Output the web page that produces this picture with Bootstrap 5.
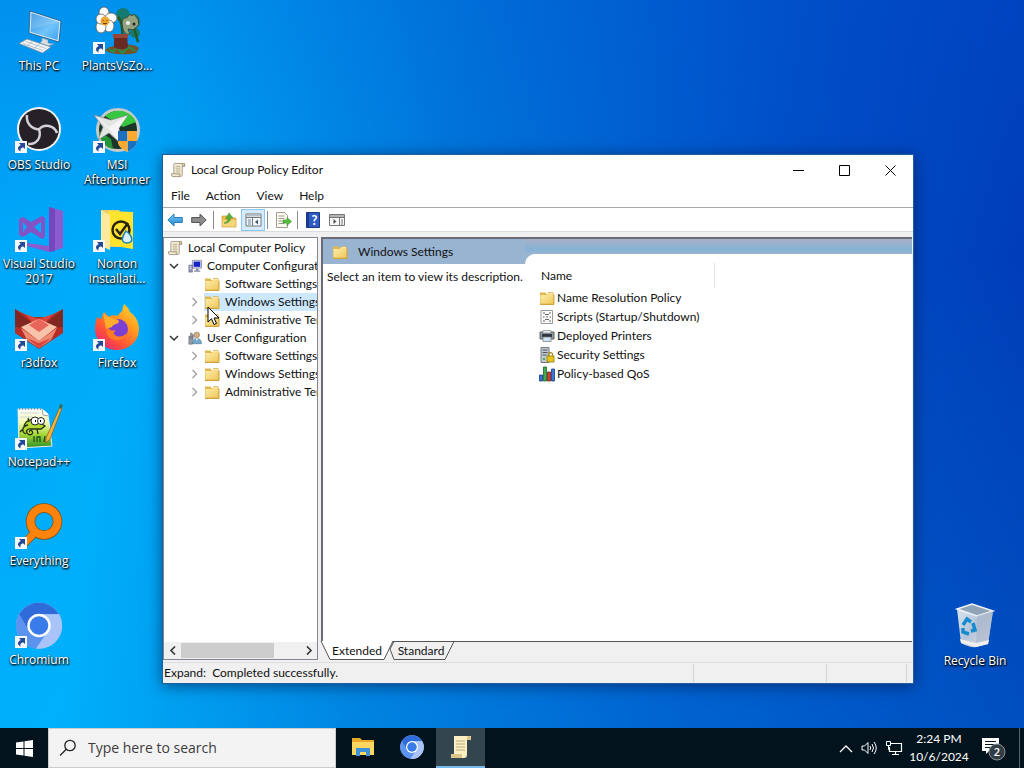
<!DOCTYPE html>
<html lang="en">
<head>
<meta charset="utf-8">
<meta name="viewport" content="width=device-width, initial-scale=1">
<title>Local Group Policy Editor</title>
<link href="https://cdn.jsdelivr.net/npm/bootstrap@5.3.0/dist/css/bootstrap.min.css" rel="stylesheet">
<style>
  body { font-family: "Open Sans", "Noto Sans", sans-serif; font-size: 12px; line-height: 18px; color: #111; cursor: default; }
  button, input { font: inherit; color: inherit; }
  svg { display: block; flex: none; }
  button { border: 0; background: none; padding: 0; }
  .desktop { background: linear-gradient(to bottom, #0048c840, #00c8ff00 35%, #00c8ff28), linear-gradient(100deg, #00a8fa 0, #00acfa 16%, #0078dc 42%, #0050c8 70%, #0038b4 100%); }

  /* shortcuts */
  .shortcuts { display: grid; grid-template-columns: 78px 78px; grid-auto-rows: 99px; width: 156px; padding-top: 8px; }
  .shortcut { color: #fff; text-decoration: none; text-align: center; line-height: 15px; text-shadow: 0 1px 2px #000, 1px 1px 2px #000; width: 78px; }
  .shortcut svg { margin: 0 auto 2px; overflow: visible; }
  .shortcut.solo { grid-column: 1; }
  .bin { right: 10px; bottom: 60px; }

  /* editor window */
  .editor { font-family: Lato, "Open Sans", sans-serif; left: 162px; right: 110px; top: 154px; bottom: 44px; background: #f0f0f0; border: 1px solid #1c5f9c; box-shadow: 0 2px 14px #00184099; }
  .titlebar { height: 30px; gap: 5px; padding-left: 8px; }
  .titlebar button { width: 46px; height: 30px; display: grid; place-items: center; }
  .menus { height: 23px; border-bottom: 1px solid #a9a9a9; }
  .menus button { padding: 0 8px; }
  .tools { height: 24px; border-bottom: 1px solid #dcdcdc; }
  .tools button { width: 24px; height: 22px; display: grid; place-items: center; border: 1px solid transparent; }
  .tools button.on { background: #d5eafa; border-color: #8cc6f2; }
  .tools .rule { width: 1px; height: 18px; background: #8a8a8a; margin: 0 3px 0 2px; }
  .panes { padding: 5px 1px 2px 0; gap: 3px; }
  .side { width: 155px; background: #fff; border: 1px solid #828790; }
  .tree { padding-top: 1px; }
  .tree li { height: 18px; }
  .tree .twist { width: 20px; display: grid; place-items: center; flex: none; }
  .tree .lbl { white-space: nowrap; padding-left: 5px; }
  .tree .kid { padding-left: 20px; }
  .tree .hot { background: #cce8ff; }
  .hscroll { height: 17px; background: #f0f0f0; }
  .hscroll button { width: 17px; height: 17px; display: grid; place-items: center; }
  .hscroll .thumb { width: 78%; height: 15px; background: #cdcdcd; }
  .view { background: #fff; border-left: 2px solid #6b6b75; border-top: 2px solid #6b6b75; }
  .blurb { width: 202px; white-space: nowrap; }
  .band { height: 25px; background: #99b4d1; padding-left: 9px; gap: 10px; }
  .listing { background: linear-gradient(#a9b0c6, #86b2d4 10px, #99b4d1 15px); padding-top: 15px; }
  .listing .sheet { background: #fff; border-top-left-radius: 10px; padding: 9px 0 0 14px; }
  .items { width: 176px; border-collapse: collapse; }
  .items th { font-weight: 400; height: 25px; padding: 0 0 0 2px; border-right: 1px solid #e3e3e3; }
  .items td { height: 19px; padding: 0; white-space: nowrap; }
  .items td div { gap: 2px; }
  .tabs { height: 19px; border-top: 1px solid #555; }
  .tabs button { height: 19px; width: 64px; margin-top: -1px; position: relative; }
  .tabs button svg { position: absolute; inset: 0; overflow: visible; }
  .tabs button span { position: relative; }
  .status { height: 21px; border-top: 1px solid #dcdcdc; }
  .status .cell { border-right: 1px solid #d4d4d4; margin: 1px 0; padding-left: 1px; }
  .pointer { left: 44px; top: 151px; }

  /* taskbar */
  .taskbar { height: 40px; background: #03131d; color: #fff; }
  .taskbar .start { width: 48px; display: grid; place-items: center; }
  .search { width: 288px; background: #f3f3f3; border: 1px solid #c9cdd0; color: #222; padding-left: 10px; gap: 9px; }
  .search input { border: 0; background: none; outline: 0; font-size: 14px; min-width: 0; }
  .search input::placeholder { color: #3c3c3c; opacity: 1; }
  .apps { padding-left: 2px; }
  .taskbar .app { width: 49px; display: grid; place-items: center; border-bottom: 2px solid transparent; }
  .taskbar .app.on { background: #33454f; border-color: #76b9ed; }
  .clock { width: 64px; text-align: center; font-family: Lato, sans-serif; }
  .notes { width: 44px; }
  .peek { width: 5px; border-left: 1px solid #59646a; }
</style>
</head>
<body class="vh-100 d-flex flex-column overflow-hidden">

<svg width="0" height="0" class="position-absolute" aria-hidden="true">
  <defs>
    <linearGradient id="gScreen" x1="0" y1="0" x2="1" y2="1"><stop offset="0" stop-color="#2f8fe0"/><stop offset=".6" stop-color="#72c5fa"/><stop offset="1" stop-color="#3e9ff0"/></linearGradient>
    <linearGradient id="gFox" x1="1" y1="0" x2=".2" y2="1"><stop offset="0" stop-color="#ffe23a"/><stop offset=".4" stop-color="#ff9a1f"/><stop offset=".75" stop-color="#ff4f3a"/><stop offset="1" stop-color="#e3257c"/></linearGradient>
    <linearGradient id="gGrass" x1="0" y1="0" x2="0" y2="1"><stop offset="0" stop-color="#fff"/><stop offset=".35" stop-color="#f2f8b0"/><stop offset=".65" stop-color="#a5d83a"/><stop offset="1" stop-color="#2b8f24"/></linearGradient>
    <linearGradient id="gFolder" x1="0" y1="0" x2="1" y2="1"><stop offset="0" stop-color="#fff0b0"/><stop offset="1" stop-color="#efc75c"/></linearGradient>
    <linearGradient id="gBin" x1="0" y1="0" x2="1" y2="1"><stop offset="0" stop-color="#dfe9f2"/><stop offset=".5" stop-color="#b3c3d8"/><stop offset="1" stop-color="#e2e4e8"/></linearGradient>
    <linearGradient id="gBlue" x1="0" y1="0" x2="0" y2="1"><stop offset="0" stop-color="#7cc9f5"/><stop offset="1" stop-color="#1d86cf"/></linearGradient>
  </defs>
  <symbol id="link" viewBox="0 0 12 12"><path d="M0 0h12v12H0z" fill="#f5f7fa"/><path d="M4 2h6v6L8 6.300C5.500 7 5.200 8.500 5.500 10.500 2.200 9 2.200 5.500 5.800 4z" fill="#224a96"/></symbol>
  <symbol id="folder" viewBox="0 0 16 16"><path d="M1 2.500h5.500l1 1.500H15v10H1z" fill="#e3b74a"/><path d="M1.500 5h6l2-2h5v10.500h-13z" fill="url(#gFolder)"/><path d="M1 14.500h14V5" fill="none" stroke="#cfa33e"/><path d="M9 2.500h5v2" fill="#fff6cf" stroke="#d5a842" stroke-width=".7"/></symbol>
  <symbol id="scroll" viewBox="0 0 16 16"><path d="M4 1h10.500v3H12v9c0 1.300-.8 2-2 2H2c-1 0-1.500-.8-1.500-1.500V12H3V3c0-1.200.3-2 1-2z" fill="#f6efd8" stroke="#998c75" stroke-width=".9"/><path d="M12 4V2.500c0-1 .6-1.500 1.300-1.500s1.200.6 1.200 1.500V4zM3 12h6.500v1.500c0 1 .5 1.500 1 1.500" fill="#e3d3a9" stroke="#998c75" stroke-width=".8"/><path d="M5 4h5M5 6h5M5 8h5M5 10h5" stroke="#b0a288" stroke-width=".9"/></symbol>
  <symbol id="open" viewBox="0 0 10 10"><path d="M1 3l4 4 4-4" fill="none" stroke="#333" stroke-width="1.500"/></symbol>
  <symbol id="shut" viewBox="0 0 10 10"><path d="M3.500 1l4 4-4 4" fill="none" stroke="#a0a0a0" stroke-width="1.400"/></symbol>
  <symbol id="chrome" viewBox="0 0 48 48"><circle cx="24" cy="24" r="23.500" fill="#a5c4fa"/><path d="M3.500 12.500A23.500 23.500 0 0 1 44.500 12.500H24L14 30z" fill="#2f6bd9"/><path d="M3.500 12.500A23.500 23.500 0 0 0 21 47.500L33 30 14 30z" fill="#5b93ef"/><path d="M24 12.500h20.500A23.500 23.500 0 0 1 21 47.500l13-18z" fill="#a9c4f8"/><circle cx="24" cy="24" r="12" fill="#fff"/><circle cx="24" cy="24" r="9.500" fill="#397be8"/></symbol>
</svg>

<main class="desktop position-relative flex-grow-1">
  <nav class="shortcuts" aria-label="Desktop">
    <a href="#" class="shortcut">
      <svg width="48" height="48" viewBox="0 0 48 48"><path d="M15 3l31 10-2 21-30-9z" fill="#d9ecf8" stroke="#24557e" stroke-width=".8"/><path d="M16.500 5L44.500 14l-2 18L15.500 24z" fill="url(#gScreen)"/><path d="M16.500 5L44.500 14 15.500 21z" fill="#fff" opacity=".15"/><path d="M27 30l6 2v3l6 1-6 2-8-3 2-2z" fill="#d7dde3" stroke="#8294a3" stroke-width=".5"/><path d="M4 35.500l8-4.500 24 8-8.500 6z" fill="#f1f4f7" stroke="#79899a" stroke-width=".8"/><path d="M8 35.500l20 7M11 33.500l20 7M12 38l6-5M19 40.500l6-5" stroke="#a9b5c0" stroke-width=".8"/></svg>This PC</a>
    <a href="#" class="shortcut">
      <svg width="48" height="48" viewBox="0 0 48 48"><g fill="#157b71"><circle cx="30" cy="7" r="7"/><circle cx="40" cy="13" r="7"/><circle cx="42" cy="25" r="5"/></g><path d="M25 9c4 4 5 14 4 20M30 13c6-6 15-3 15 4M41 20l4 14" stroke="#27581e" stroke-width="2.500" fill="none"/><path d="M29 13c2-5 6-2 6-5 2-3 3 1 5-1 2-2 3 3 5 4l1 6-6 5-5-1 2 5c-5 2-8-4-8-13z" fill="#91a280" stroke="#39462f"/><circle cx="35" cy="15" r="2" fill="#eee"/><circle cx="41" cy="16" r="1.500" fill="#222"/><path d="M12 42c6-6 28-8 34-2l-3 5c-9 2-26 2-31-3z" fill="#765328"/><path d="M16 41l4 3 4-5 5 6 7-6 6 4" stroke="#26904a" stroke-width="2" fill="none"/><path d="M21 27h13l1 12c-3 3-12 3-14 0z" fill="#6a2a24"/><path d="M20 26h15v4H20z" fill="#974538"/><g fill="#fff" stroke="#675b51" stroke-width=".8"><ellipse cx="11" cy="5" rx="5" ry="6"/><ellipse cx="18" cy="10" rx="6" ry="5"/><ellipse cx="16" cy="18" rx="5" ry="6"/><ellipse cx="8" cy="19" rx="5" ry="6"/><ellipse cx="8" cy="11" rx="5" ry="5"/></g><circle cx="12" cy="13" r="4.500" fill="#eca630"/><path d="M10 12v1M14 12v1M10 15c1 1 3 1 4 0" stroke="#7a4010"/><use href="#link" y="34" width="12" height="12"/></svg>PlantsVsZo...</a>
    <a href="#" class="shortcut">
      <svg width="48" height="48" viewBox="0 0 48 48"><circle cx="24" cy="22" r="22" fill="#f4f4f4"/><circle cx="24" cy="22" r="20" fill="#252127"/><path d="M12 8c-1 8 4 14 12 14.500M42 26c-3-8-13-9.500-18-3.500M13 37c8 1 14-6 11-14.500" fill="none" stroke="#d4d2d6" stroke-width="2.500"/><use href="#link" y="34" width="12" height="12"/></svg>OBS Studio</a>
    <a href="#" class="shortcut">
      <svg width="48" height="48" viewBox="0 0 48 48"><circle cx="25" cy="23" r="20.500" fill="#1d3429" stroke="#c6cbc9" stroke-width="3"/><path d="M12 9C22 0 38 3 43 15l-13 5z" fill="#37c63f"/><path d="M6 24c0 10 7 17 14 18l-2-10z" fill="#239639"/><path d="M1 8l17 5 17-5-9 13 1 15-11-10L5 33l5-13z" fill="#e3e5e3" stroke="#7f8683" stroke-width=".7"/><path d="M1 8l15 12 19-12-9 13 1 15-11-14z" fill="#fff" opacity=".6"/><path d="M25 24h19v10c0 6-6 9-9.500 11C31 43 25 40 25 34z" fill="#fff"/><path d="M25 24h9.500v10H25zM34.500 34H44c0 6-6 9-9.500 11z" fill="#1c70bd"/><path d="M34.500 24H44v10h-9.500zM25 34h9.500v11C31 43 25 40 25 34z" fill="#fca92f"/><use href="#link" y="34" width="12" height="12"/></svg>MSI Afterburner</a>
    <a href="#" class="shortcut">
      <svg width="48" height="48" viewBox="0 0 48 48"><path d="M34 1l14 4v37l-14 4L12 40v-3l22 3z" fill="#8a5cd0"/><path d="M34 1l6 2v42l-6 1z" fill="#7546bd"/><path d="M4 13l4-2 8 5 11-6 3 2v19l-3 2-11-7-8 5-4-2z" fill="#8353c6"/><path d="M8 16v10l4-5zM26 16v11l-7-6z" fill="#08aaff"/><use href="#link" y="34" width="12" height="12"/></svg>Visual Studio 2017</a>
    <a href="#" class="shortcut">
      <svg width="48" height="48" viewBox="0 0 48 48"><path d="M8 4h18l2 3h11v34H8z" fill="#e9cd66"/><path d="M15 5l25 1v37l-24-4z" fill="#ffe32e"/><path d="M8 4l9 5v35l-9-4z" fill="#ffe99c"/><circle cx="28" cy="24" r="8.500" fill="none" stroke="#26240f" stroke-width="2.500"/><path d="M23 23l4 5 8-11" fill="none" stroke="#26240f" stroke-width="2.500"/><path d="M33 25c7 5 8 12 1 12s-5-7-1-12z" fill="#d9f0ff" stroke="#1d85b4" stroke-width="1.500"/><use href="#link" y="34" width="12" height="12"/></svg>Norton Installati...</a>
    <a href="#" class="shortcut">
      <svg width="48" height="48" viewBox="0 0 48 48"><path d="M0 4l15 8h18L48 4v24L24 44 0 28z" fill="#b62d27"/><path d="M0 4l24 20L0 22zM48 4L24 24l24-2z" fill="#812620"/><path d="M10 9l14 5 14-5-14 16z" fill="#d8463c"/><path d="M6 22l18-8 18 8-18 14z" fill="#f8c3aa"/><path d="M24 14l10 6-10 7-10-7z" fill="#e9645a"/><path d="M6 23l18 13 18-13-6 12-12 8-12-8z" fill="#ef8a72"/><path d="M12 33l12 5 12-5-12 10z" fill="#d8463c"/><use href="#link" y="34" width="12" height="12"/></svg>r3dfox</a>
    <a href="#" class="shortcut">
      <svg width="48" height="48" viewBox="0 0 48 48"><path d="M4 12l4 2 3-7 5 5c2-2 5-2 8-1L29 6c1-3 1-5 2-7 3 2 5 5 6 8 6 4 9 11 9 17 0 12-10 21-22 21S2 36 2 24c0-5 1-9 2-12z" fill="url(#gFox)"/><circle cx="25" cy="24" r="10" fill="#7b3fd4"/><path d="M10 8c4 4 8 4 11 6 3 0 5 1 5 3-3 3-6 2-7 5l-6 2z" fill="#ffab2b"/><path d="M15 22c2 4 4 4 8 3-2 2-3 4-1 5 4 3 9 1 12-2-2 8-14 10-19 3-2-3-2-6 0-9z" fill="#ff7a25"/><use href="#link" y="34" width="12" height="12"/></svg>Firefox</a>
    <a href="#" class="shortcut solo">
      <svg width="48" height="48" viewBox="0 0 48 48"><path d="M3 5h24l6 5 4 32-33 2z" fill="url(#gGrass)" stroke="#ebeeee"/><path d="M27 5l1 6 6 1" fill="#fff" stroke="#777" stroke-width=".7"/><path d="M4 5h23" stroke="#555" stroke-dasharray="1 2"/><path d="M5 9h19M5 13h12" stroke="#bac6d6" stroke-width=".7"/><path d="M9 22c2-7 10-8 15-4l6 4-4 3H16c-4-1-6 3-3 5s6-1 4-3-3 1-2 1M8 25l-3 3M22 25l1 5M14 18l-1-4M11 30c-5-2-4-8 2-9" fill="#b4d834" stroke="#253116" stroke-width="1.300"/><circle cx="20" cy="17" r="4" fill="#fff" stroke="#222"/><circle cx="26" cy="17" r="3.500" fill="#fff" stroke="#222"/><path d="M20 17h1M25 17h1" stroke="#000" stroke-width="2"/><path d="M19 38v-6M22 38v-5h3v5M29 38l1-6" stroke="#184f18" stroke-width="1.300" fill="none"/><path d="M45 3l2 1-12 31-4 4v-5z" fill="#f2b63c" stroke="#88551e" stroke-width=".7"/><path d="M44 4l1-4 3 1-2 4z" fill="#346c51"/><use href="#link" y="34" width="12" height="12"/></svg>Notepad++</a>
    <a href="#" class="shortcut solo">
      <svg width="48" height="48" viewBox="0 0 48 48"><path d="M16 28L7 38l5 5 10-10z" fill="#ff8308" stroke="#7c511d"/><circle cx="29" cy="18.500" r="13.500" fill="none" stroke="#7c511d" stroke-width="9.500"/><circle cx="29" cy="18.500" r="13.500" fill="none" stroke="#ff8308" stroke-width="8"/><path d="M17 27l-8 9 4 4 10-9z" fill="#ff8308"/><use href="#link" y="34" width="12" height="12"/></svg>Everything</a>
    <a href="#" class="shortcut solo">
      <svg width="48" height="48" viewBox="0 0 48 48"><use href="#chrome" width="48" height="47"/><use href="#link" y="34" width="12" height="12"/></svg>Chromium</a>
  </nav>

  <a href="#" class="shortcut bin position-absolute">
    <svg width="48" height="48" viewBox="0 0 48 48"><path d="M6 6l4 34c5 3 12 5 15 4l12-3 5-33-21-6z" fill="url(#gBin)"/><path d="M6 6l15-5 21 7-16 5z" fill="#90a4b8" stroke="#eff3f6" stroke-width="1.500"/><path d="M26 13l-1 31 12-3 5-33z" fill="#a9b5c9" opacity=".65"/><path d="M9 36l16 4 13-3-1 4-12 3-15-4z" fill="#f0eeee"/><g fill="none" stroke="#168bcf" stroke-width="3.500"><path d="M12 22l4-6 4 3M22 20l2 7-4 1M18 31l-6-2v-4"/></g></svg>Recycle Bin</a>

  <section class="editor position-absolute d-flex flex-column" aria-label="Local Group Policy Editor">
    <header class="titlebar bg-white d-flex align-items-center flex-shrink-0">
      <svg width="15" height="16"><use href="#scroll"/></svg>
      <span>Local Group Policy Editor</span>
      <div class="ms-auto d-flex">
        <button aria-label="Minimize"><svg width="11" height="11"><path d="M0 5.500h11" stroke="#000"/></svg></button>
        <button aria-label="Maximize"><svg width="11" height="11"><path d="M.5.5h10v10H.5z" fill="none" stroke="#000"/></svg></button>
        <button aria-label="Close"><svg width="11" height="11"><path d="M.5.5l10 10M10.500.5l-10 10" stroke="#000"/></svg></button>
      </div>
    </header>
    <nav class="menus bg-white d-flex align-items-center flex-shrink-0">
      <button>File</button><button>Action</button><button>View</button><button>Help</button>
    </nav>
    <div class="tools bg-white d-flex align-items-center flex-shrink-0">
      <button aria-label="Back"><svg width="16" height="16"><path d="M.8 8L7 2v3.500h8.300v5H7V14z" fill="url(#gBlue)" stroke="#2b7fb8"/></svg></button>
      <button aria-label="Forward"><svg width="16" height="16"><path d="M15.200 8L9 2v3.500H.7v5H9V14z" fill="#8c8c8c" stroke="#555"/></svg></button>
      <span class="rule"></span>
      <button aria-label="Up one level"><svg width="16" height="16"><path d="M1 4h5l1 2h8v9H1z" fill="#eebf4b" stroke="#c1993d" stroke-width=".7"/><path d="M1.500 8h13v6.500h-13z" fill="#f6d67a"/><path d="M3 11c3 0 4-3 4-5L4.500 7 8 1l4 5-2.500-.4C9.500 9 7 12 3 11z" fill="#54b43a" stroke="#2f812a" stroke-width=".5"/></svg></button>
      <button class="on" aria-label="Show console tree"><svg width="17" height="16"><path d="M1 2h15v12H1z" fill="#f7f7f7" stroke="#707a80"/><path d="M1 5.500h15M7.500 6v8" stroke="#707a80"/><path d="M1.500 3.500H15" stroke="#b4bfc7" stroke-width="2"/><path d="M3 8h3M3 10h3M3 12h3" stroke="#5b8aa0"/><path d="M13 7.500v5L10 10z" fill="#3a5e70"/></svg></button>
      <span class="rule"></span>
      <button aria-label="Export list"><svg width="17" height="16"><path d="M1.500.5h8l3 3v12h-11z" fill="#fdfbf1" stroke="#a39c8a"/><path d="M3.500 4h6M3.500 6.500h6M3.500 9h4M3.500 11.500h6" stroke="#9b988d"/><path d="M8 8h4V5.500l4.500 4L12 13.500V11H8z" fill="#58bd3c" stroke="#35932b" stroke-width=".6"/></svg></button>
      <span class="rule"></span>
      <button aria-label="Help topics"><svg width="14" height="16"><path d="M.5.5h13v15H.5z" fill="#2f5cc0" stroke="#1b3783"/><path d="M1 1h2v14H1z" fill="#1d3c90"/><text x="8.500" y="12.500" font-size="13" font-weight="700" text-anchor="middle" fill="#fff">?</text></svg></button>
      <button aria-label="Show action pane"><svg width="16" height="16"><path d="M.5 2.500h15v11H.5z" fill="#f7f7f7" stroke="#777"/><path d="M.5 5.500h15M10.500 6v8" stroke="#777"/><path d="M1 4h14" stroke="#b4b4b4" stroke-width="2"/><path d="M4.500 7v5l3-2.500z" fill="#555"/><path d="M12 8h2M12 10h2M12 12h2" stroke="#777"/></svg></button>
    </div>

    <div class="panes d-flex flex-grow-1">
      <div class="side d-flex flex-column flex-shrink-0">
        <ul class="tree list-unstyled m-0 flex-grow-1 overflow-hidden">
          <li class="d-flex align-items-center"><svg class="ms-1" width="15" height="16"><use href="#scroll"/></svg><span class="lbl">Local Computer Policy</span></li>
          <li class="d-flex align-items-center"><span class="twist"><svg width="10" height="10"><use href="#open"/></svg></span><svg class="ms-1" width="14" height="16" viewBox="0 0 16 16"><path d="M5 1.500h10.500v9H5z" fill="#dcdcea" stroke="#8890a8"/><path d="M6.500 3H14v6H6.500z" fill="#1524c8"/><path d="M9 11h3v2h2v1.500H7V13h2z" fill="#858ca3"/><path d="M1 7h4v8H1z" fill="#8f94b6" stroke="#55597a" stroke-width=".6"/><path d="M2 9h2M2 11h2" stroke="#fff"/></svg><span class="lbl">Computer Configuration</span></li>
          <li class="d-flex align-items-center kid"><span class="twist"></span><svg width="16" height="16"><use href="#folder"/></svg><span class="lbl">Software Settings</span></li>
          <li class="d-flex align-items-center kid"><span class="twist"><svg width="10" height="10"><use href="#shut"/></svg></span><span class="hot d-flex align-items-center"><svg width="16" height="16"><use href="#folder"/></svg><span class="lbl">Windows Settings</span></span></li>
          <li class="d-flex align-items-center kid"><span class="twist"><svg width="10" height="10"><use href="#shut"/></svg></span><svg width="16" height="16"><use href="#folder"/></svg><span class="lbl">Administrative Templates</span></li>
          <li class="d-flex align-items-center"><span class="twist"><svg width="10" height="10"><use href="#open"/></svg></span><svg class="ms-1" width="14" height="16" viewBox="0 0 16 16"><path d="M1 6h4v9H1zM3 2l3 2v5H3z" fill="#9aa0a8" stroke="#60666e" stroke-width=".7"/><circle cx="10" cy="4.500" r="3.200" fill="#d5ae86" stroke="#7b5c3d" stroke-width=".6"/><path d="M5 14.500c0-4 2-6 5-6s5.500 2 5.500 6z" fill="#74a9cb" stroke="#466e88" stroke-width=".6"/><path d="M9 8.500l1 3 1.500-3z" fill="#fff"/></svg><span class="lbl">User Configuration</span></li>
          <li class="d-flex align-items-center kid"><span class="twist"><svg width="10" height="10"><use href="#shut"/></svg></span><svg width="16" height="16"><use href="#folder"/></svg><span class="lbl">Software Settings</span></li>
          <li class="d-flex align-items-center kid"><span class="twist"><svg width="10" height="10"><use href="#shut"/></svg></span><svg width="16" height="16"><use href="#folder"/></svg><span class="lbl">Windows Settings</span></li>
          <li class="d-flex align-items-center kid"><span class="twist"><svg width="10" height="10"><use href="#shut"/></svg></span><svg width="16" height="16"><use href="#folder"/></svg><span class="lbl">Administrative Templates</span></li>
        </ul>
        <div class="hscroll d-flex align-items-center">
          <button aria-label="Scroll left"><svg width="8" height="9"><path d="M6 .5l-4 4 4 4" fill="none" stroke="#333" stroke-width="1.600"/></svg></button>
          <div class="flex-grow-1"><div class="thumb"></div></div>
          <button aria-label="Scroll right"><svg width="8" height="9"><path d="M2 .5l4 4-4 4" fill="none" stroke="#333" stroke-width="1.600"/></svg></button>
        </div>
      </div>

      <div class="d-flex flex-column flex-grow-1">
        <div class="view d-flex flex-grow-1">
          <div class="blurb flex-shrink-0">
            <div class="band d-flex align-items-center"><svg width="16" height="16"><use href="#folder"/></svg><span>Windows Settings</span></div>
            <p class="m-0 ps-1 pt-1">Select an item to view its description.</p>
          </div>
          <div class="listing flex-grow-1 d-flex">
            <div class="sheet flex-grow-1">
              <table class="items">
                <thead><tr><th scope="col">Name</th></tr></thead>
                <tbody>
                  <tr><td><div class="d-flex align-items-center"><svg width="16" height="16"><use href="#folder"/></svg><span>Name Resolution Policy</span></div></td></tr>
                  <tr><td><div class="d-flex align-items-center"><svg width="16" height="16"><path d="M2 1.500h11.500v13H2z" fill="#fafafa" stroke="#999"/><path d="M4 4h2M10 4h2M6 5.500h4M4 8h1.500M7 8h2M10.500 8H12M6 10.500h4M4 12h2M10 12h2" stroke="#666" stroke-width="1.200"/></svg><span>Scripts (Startup/Shutdown)</span></div></td></tr>
                  <tr><td><div class="d-flex align-items-center"><svg width="16" height="16"><path d="M1 4h14v7H1z" fill="#8f979f" stroke="#5b626a"/><path d="M4 2.500h8V5H4z" fill="#e8edf0" stroke="#777" stroke-width=".6"/><path d="M3 6h10v3H3z" fill="#30363d"/><path d="M4 9h8v4.500H4z" fill="#cfe2f4" stroke="#777" stroke-width=".7"/></svg><span>Deployed Printers</span></div></td></tr>
                  <tr><td><div class="d-flex align-items-center"><svg width="16" height="16"><path d="M2 .5h8v15H2z" fill="#c3cad0" stroke="#727b83"/><path d="M3.500 3h5M3.500 5.500h5M3.500 8h4" stroke="#4d555d"/><path d="M4 11h2v2H4z" fill="#54a84c"/><path d="M8 9h7v6H8z" fill="#e8c51c" stroke="#917809" stroke-width=".8"/><path d="M9.500 9V7.500c0-2.500 4-2.500 4 0V9" fill="none" stroke="#a48a17" stroke-width="1.300"/></svg><span>Security Settings</span></div></td></tr>
                  <tr><td><div class="d-flex align-items-center"><svg width="16" height="16"><path d="M.5 9h3v6h-3z" fill="#3774d2" stroke="#173b80" stroke-width=".8"/><path d="M4.500 1h3v14h-3z" fill="#3dae4b" stroke="#15662b" stroke-width=".8"/><path d="M8.500 6h3v9h-3z" fill="#d93a2f" stroke="#7b1a18" stroke-width=".8"/><path d="M12.500 3h3v12h-3z" fill="#3577d7" stroke="#173b80" stroke-width=".8"/></svg><span>Policy-based QoS</span></div></td></tr>
                </tbody>
              </table>
            </div>
          </div>
        </div>
        <div class="tabs d-flex flex-shrink-0">
          <button class="ms-1"><svg width="64" height="19"><path d="M-4 0L5 18.500h54L68 0z" fill="#fff"/><path d="M-4 0L5 18.500h54L68 0" fill="none" stroke="#555"/></svg><span>Extended</span></button>
          <button><svg width="64" height="19"><path d="M1 8l4-7.500h60L56 18.500H5z" fill="#f0f0f0" stroke="#555"/></svg><span>Standard</span></button>
        </div>
      </div>
    </div>

    <footer class="status d-flex flex-shrink-0">
      <div class="cell flex-grow-1">Expand:&nbsp; Completed successfully.</div>
      <div class="cell" style="width:133px"></div>
      <div class="cell" style="width:80px"></div>
      <div style="width:6px"></div>
    </footer>

    <svg class="pointer position-absolute" width="13" height="20"><path d="M1 1v15l3.500-3.200L7 18.500l2.500-1.100L7 12h5z" fill="#fff" stroke="#000"/></svg>
  </section>
</main>

<footer class="taskbar d-flex flex-shrink-0">
  <button class="start" aria-label="Start"><svg width="17" height="17"><path d="M0 2.500l7.500-1V8H0zM8.500 1.300L17 0v8H8.500zM0 9h7.500v6.500l-7.500-1zM8.500 9H17v8l-8.500-1.300z" fill="#fff"/></svg></button>
  <label class="search d-flex align-items-center"><svg width="18" height="18"><circle cx="11" cy="6.500" r="5.200" fill="none" stroke="#222" stroke-width="1.300"/><path d="M7.300 10.200L1 16.500" stroke="#222" stroke-width="1.300"/></svg><input type="text" class="flex-grow-1" placeholder="Type here to search" aria-label="Type here to search"></label>
  <div class="apps d-flex">
    <button class="app" aria-label="File Explorer"><svg width="22" height="20"><path d="M0 1h8l2 2h12v15H0z" fill="#e9a827"/><path d="M0 5h22v13H0z" fill="#ffd75e"/><path d="M4 11h14v8h-4v-4H8v4H4z" fill="#3e93d8"/></svg></button>
    <button class="app" aria-label="Chromium"><svg width="24" height="24"><use href="#chrome"/></svg></button>
    <button class="app on" aria-label="Local Group Policy Editor"><svg width="22" height="24" viewBox="0 0 22 24"><path d="M4 1h17v4h-4v14c0 3-1 4-3 4H1v-4h3z" fill="#fbefc4"/><path d="M17 5V2c0-1 4-2 4 1v2zM1 19h11v4H2c-1 0-1-2-1-4z" fill="#dcc58b"/><path d="M6 6h9M6 9h9M6 12h9M6 15h9" stroke="#baa880"/></svg></button>
  </div>
  <div class="ms-auto d-flex align-items-center">
    <button class="me-2" aria-label="Show hidden icons"><svg width="14" height="9"><path d="M1 8l6-6 6 6" fill="none" stroke="#fff" stroke-width="1.300"/></svg></button>
    <button class="me-2" aria-label="Volume"><svg width="16" height="14"><path d="M1 5h2.500L7 1.500v11L3.500 9H1z" fill="none" stroke="#fff"/><path d="M9 5q1.500 2 0 4M11 3q3 4 0 8M13 1q4.500 6 0 12" fill="none" stroke="#fff"/></svg></button>
    <button class="me-1" aria-label="Network"><svg width="18" height="16"><path d="M6 3.500h10.500v8H4.500V7M10.500 12v3M7 14.500h7" fill="none" stroke="#fff" stroke-width="1.200"/><path d="M1.500 1.500h4v4h-4zM3.500 6v3.500H5" fill="none" stroke="#fff"/></svg></button>
    <div class="clock">2:24 PM<br>10/6/2024</div>
    <button class="notes" aria-label="2 new notifications"><svg class="mx-auto" width="25" height="26"><path d="M1 3h17v13H8l-3 3v-3H1z" fill="#fff"/><path d="M4 6.500h11M4 9.500h11M4 12.500h6" stroke="#03131d"/><circle cx="16" cy="17" r="8" fill="#333d45" stroke="#8b9399"/><text x="16" y="21" font-size="11" font-weight="600" text-anchor="middle" fill="#fff">2</text></svg></button>
    <span class="peek align-self-stretch ms-1"></span>
  </div>
</footer>

<script src="https://cdn.jsdelivr.net/npm/bootstrap@5.3.0/dist/js/bootstrap.bundle.min.js"></script>
</body>
</html>
